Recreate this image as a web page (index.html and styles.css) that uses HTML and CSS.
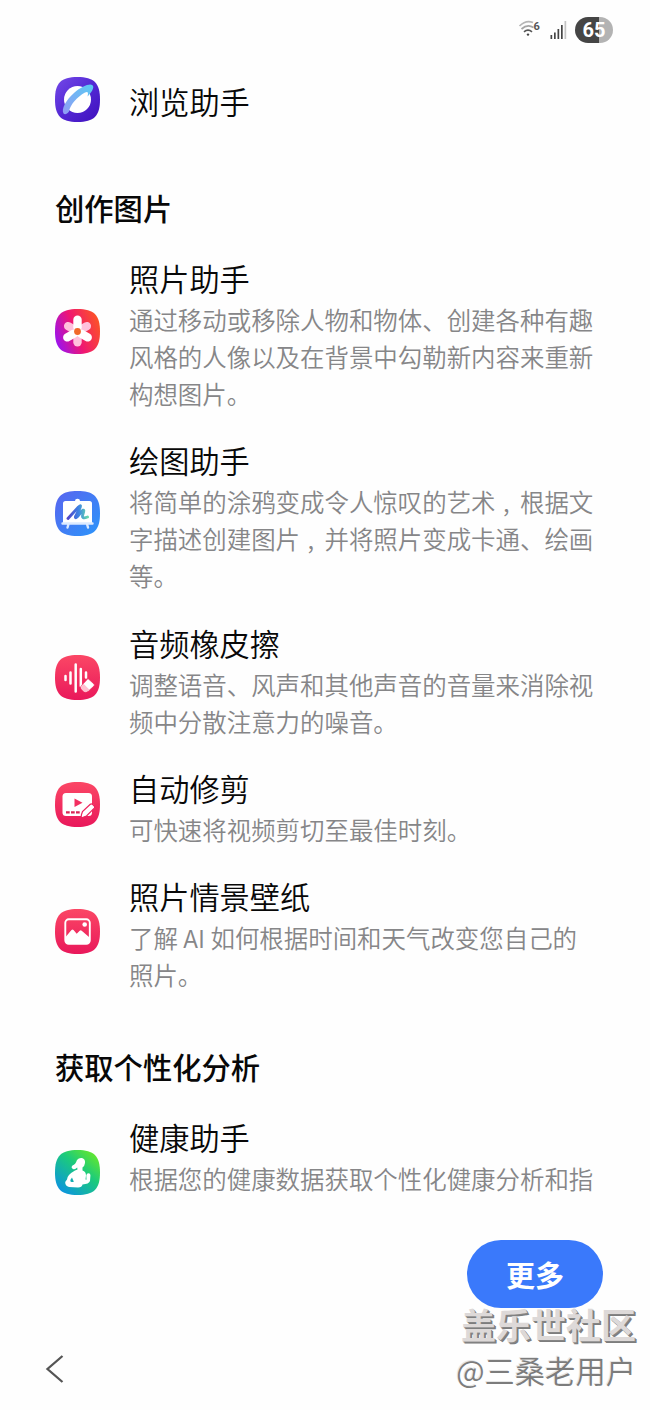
FILE: index.html
```html
<!DOCTYPE html>
<html lang="zh-CN">
<head>
<meta charset="utf-8">
<title>浏览助手</title>
<link rel="stylesheet" href="styles.css">
</head>
<body>
<svg class="defs" width="0" height="0" aria-hidden="true">
  <defs>
    <path id="tile" d="M22.5 0C39 0 45 6 45 22.500S39 45 22.500 45 0 39 0 22.500 6 0 22.500 0Z"/>
    <linearGradient id="violet" x1="0" y1="0" x2="1" y2="1"><stop offset="0" stop-color="#7449e8"/><stop offset=".5" stop-color="#5328d4"/><stop offset="1" stop-color="#3f10bd"/></linearGradient>
    <linearGradient id="ring" x1="1" y1="0" x2="0" y2="1"><stop offset="0" stop-color="#59c9f3"/><stop offset="1" stop-color="#929cf5"/></linearGradient>
    <linearGradient id="photo" x1="0" y1=".75" x2="1" y2=".35"><stop offset="0" stop-color="#9813f4"/><stop offset=".48" stop-color="#ef1672"/><stop offset="1" stop-color="#fc5128"/></linearGradient>
    <linearGradient id="blue" x1="0" y1="0" x2="1" y2="1"><stop offset="0" stop-color="#5964ef"/><stop offset="1" stop-color="#2b95fa"/></linearGradient>
    <linearGradient id="brush" x1="0" y1="0" x2="1" y2="0"><stop offset="0" stop-color="#5146c8"/><stop offset=".55" stop-color="#3d83e4"/><stop offset="1" stop-color="#65d7ab"/></linearGradient>
    <linearGradient id="red" x1="0" y1="0" x2="0" y2="1"><stop offset="0" stop-color="#fb4765"/><stop offset="1" stop-color="#e9185b"/></linearGradient>
    <linearGradient id="health" x1="1" y1="0" x2=".15" y2="1"><stop offset="0" stop-color="#77ef18"/><stop offset=".45" stop-color="#1ccb7b"/><stop offset="1" stop-color="#0a91e5"/></linearGradient>
  </defs>
</svg>
<div class="screen">
  <header class="status">
    <svg class="wifi" viewBox="0 0 24 20" fill="none" stroke-width="1.700">
      <path d="M.5 6Q7 -.5 14 2.500" stroke="#b6b6b6"/><path d="M2.500 9Q8.500 3.500 14.500 7.500" stroke="#a5a5a5"/><path d="M5 11.800Q9 8.500 13 11.800" stroke="#555"/><circle cx="9" cy="14.600" r="1.200" fill="#444"/>
      <text x="14.500" y="9.500" class="wifi-num">6</text>
    </svg>
    <svg class="signal" viewBox="0 0 17 18"><path d="M.5 14h1.700v4H.5zM4 11.500h1.700V18H4zM7.500 8h1.700v10H7.500zM11 4h1.700v14H11z" fill="#454545"/><path d="M14.500 0h1.700v18h-1.700z" fill="#c4c4c4"/></svg>
    <span class="battery">65</span>
  </header>

  <main class="content">
    <article class="item first">
      <svg class="icon" viewBox="0 0 45 45"><use href="#tile" fill="url(#violet)"/><circle cx="22.500" cy="22.500" r="13.500" fill="#fff"/><path d="M8.500 36.500C6 32 11 23 19 16S35 6 37.500 8.200 36 16 32.500 19.500C33.500 15.500 33 14 30 15.500 22 20 15 28 14 34.500 12 37 10 38 8.500 36.500Z" fill="url(#ring)"/></svg>
      <div class="copy"><h3>浏览助手</h3></div>
    </article>

    <section>
      <h2>创作图片</h2>
      <article class="item">
        <svg class="icon" viewBox="0 0 45 45"><use href="#tile" fill="url(#photo)"/>
          <g fill="#ffc1dc"><rect x="18.300" y="7.500" width="8.400" height="15" rx="4.200" transform="rotate(-60 22.500 22.500)"/><rect x="18.300" y="7.500" width="8.400" height="15" rx="4.200" transform="rotate(60 22.500 22.500)"/><rect x="18.300" y="7.500" width="8.400" height="15" rx="4.200" transform="rotate(180 22.500 22.500)"/></g>
          <g fill="#fff"><rect x="18.300" y="6.500" width="8.400" height="16" rx="4.200"/><rect x="18.300" y="6.500" width="8.400" height="16" rx="4.200" transform="rotate(120 22.500 22.500)"/><rect x="18.300" y="6.500" width="8.400" height="16" rx="4.200" transform="rotate(240 22.500 22.500)"/></g><circle cx="22.500" cy="22.500" r="3.400" fill="#f1692a"/></svg>
        <div class="copy"><h3>照片助手</h3><p>通过移动或移除人物和物体、创建各种有趣<br>风格的人像以及在背景中勾勒新内容来重新<br>构想图片。</p></div>
      </article>
      <article class="item">
        <svg class="icon" viewBox="0 0 45 45"><use href="#tile" fill="url(#blue)"/><path d="M10.500 10H20q0-2.200 2.500-2.200T25 10h9.500q2.500 0 2.500 2.500v20H8v-20Q8 10 10.500 10Z" fill="#fff"/><path d="M7.500 32.500h30M13.500 33l-1 3.500M32 33l1 3.500" stroke="#dceaff" stroke-width="2.400" stroke-linecap="round"/><path d="M13 27.500L23.500 16Q27 13 24.500 18L20.500 25.500Q20 28 22.500 25.500L27 20Q30 17.500 28 23T32.500 26" fill="none" stroke="url(#brush)" stroke-width="2.900" stroke-linecap="round" stroke-linejoin="round"/></svg>
        <div class="copy"><h3>绘图助手</h3><p>将简单的涂鸦变成令人惊叹的艺术<span class="comma">,</span>根据文<br>字描述创建图片<span class="comma">,</span>并将照片变成卡通、绘画<br>等。</p></div>
      </article>
      <article class="item">
        <svg class="icon" viewBox="0 0 45 45"><use href="#tile" fill="url(#red)"/><path d="M10.500 21v4M15.500 17.500v11M20.700 9.500v27M25.800 14v17M31 17.500v5" stroke="#fff" stroke-width="2.500" stroke-linecap="round"/><path d="M33 23.500L39 29q1 1 0 2l-5.500 5q-1.500 1.500-4 1L26 34q-1-2 .5-3.500Z" fill="#fff" stroke="#f02b5f" stroke-width=".8"/><path d="M28.500 28.700l6 6-2 1.500q-2 1.300-4 0l-2-2.200q-1-1.700.5-3.500Z" fill="#ffc0d0"/></svg>
        <div class="copy"><h3>音频橡皮擦</h3><p>调整语音、风声和其他声音的音量来消除视<br>频中分散注意力的噪音。</p></div>
      </article>
      <article class="item">
        <svg class="icon" viewBox="0 0 45 45"><use href="#tile" fill="url(#red)"/><rect x="7.500" y="11" width="29.500" height="23" rx="3.500" fill="#fff"/><path d="M19.500 16.500v8.500l8-4.250Z" fill="#f32e60"/><path d="M11 30.300h14.500" stroke="#d92555" stroke-width="2.200" stroke-dasharray="3.700 1.300"/><path d="M26.500 32.500l1-3 7.800-7.300q1-.8 2 0l2 2q.8 1 0 2L31.500 34l-5.500 2Z" fill="#fff" stroke="#ec235d" stroke-width="1.200"/></svg>
        <div class="copy"><h3>自动修剪</h3><p>可快速将视频剪切至最佳时刻。</p></div>
      </article>
      <article class="item">
        <svg class="icon" viewBox="0 0 45 45"><use href="#tile" fill="url(#red)"/><rect x="10.300" y="10.300" width="24.500" height="24.500" rx="3.500" fill="none" stroke="#fff" stroke-width="1.900"/><path d="M11 27.500l5.500-6.500q1-1 2 0l3.200 3.700 3-3q1-.8 2 0l7.300 6.300v5q0 1.500-1.500 1.500h-20q-1.500 0-1.500-1.500Z" fill="#fff"/><circle cx="29.700" cy="15.500" r="2.300" fill="#fff"/></svg>
        <div class="copy"><h3>照片情景壁纸</h3><p>了解 AI 如何根据时间和天气改变您自己的<br>照片。</p></div>
      </article>
    </section>

    <section>
      <h2>获取个性化分析</h2>
      <article class="item last">
        <svg class="icon" viewBox="0 0 45 45"><use href="#tile" fill="url(#health)"/>
          <path d="M22 10Q24 7.500 27 8 30.500 9 30 13 29.500 16.500 27.500 17.500L27.500 20.500Q31 21.500 31 25.500L30.500 29.500 31.500 29.800 31.300 25.500Q31.500 23.300 33.500 23.300 36 23.500 35.300 27L35 31Q34 34 27.500 34.500 27 37.500 23 37.500L14 37Q10 36 10.200 32L12 29.500Q12 25 20 20.500L22.500 19.500 22.200 17.500Q20 20 18 19 15.500 17.500 17.500 15.500 20.500 14.500 22 10Z" fill="#fff"/><path d="M17 27.500Q14.800 30 15.500 31.500 17.500 32.500 18.800 31.700Z" fill="#12adb0"/></svg>
        <div class="copy"><h3>健康助手</h3><p>根据您的健康数据获取个性化健康分析和指</p></div>
      </article>
    </section>
  </main>

  <footer class="footer">
    <button class="more">更多</button>
    <svg class="back" viewBox="0 0 20 30"><path d="M17.500 2L2.500 15l15 13" fill="none" stroke="#555" stroke-width="2.300"/></svg>
    <div class="watermark"><div class="community">盖乐世社区</div><div class="user">@三桑老用户</div></div>
  </footer>
</div>
</body>
</html>
```
FILE: styles.css
```css
* { box-sizing: border-box; margin: 0; padding: 0; }
body { background: #fefefe; font-family: "Noto Sans CJK SC", sans-serif; color: #080808; }
.defs { position: absolute; }
.screen { width: 650px; height: 1410px; overflow: hidden; display: flex; flex-direction: column; }
.status { height: 77px; flex: none; display: flex; align-items: flex-start; justify-content: flex-end; padding: 17px 37px 0 0; }
.wifi { width: 24px; height: 20px; margin: 3px 7px 0 0; overflow: visible; }
.wifi-num { font: bold 11px Roboto, sans-serif; fill: #555; stroke: none; }
.signal { width: 17px; height: 18px; margin: 4px 8px 0 0; }
.battery { width: 38px; height: 26px; border-radius: 13px; background: linear-gradient(90deg, #454545 64%, #b3b3b3 64%); color: #fff; font: bold 20px/26px Roboto, sans-serif; text-align: center; }
.content { height: 1129px; flex: none; }
.item { display: flex; align-items: center; padding-left: 55px; margin-bottom: 27.300px; }
.icon { width: 45px; height: 45px; flex: none; margin: 0 29px 6px 0; overflow: visible; }
.copy { white-space: nowrap; }
h3 { font-size: 30.200px; line-height: 43px; padding-bottom: 1px; font-weight: 350; }
p { font-family: "Noto Sans CJK SC DemiLight", "Noto Sans CJK SC", sans-serif; font-size: 24.440px; line-height: 37px; color: #868688; font-weight: 350; }
.comma { display: inline-block; width: 1em; padding-right: 3px; text-align: center; }
h2 { font-size: 29.300px; line-height: 44px; font-weight: 500; padding-left: 55px; margin-bottom: 28px; }
.first { margin-bottom: 57px; }
.first .copy { padding-bottom: 1px; }
section { margin-bottom: 51px; }
.last { align-items: flex-start; margin-bottom: 0; }
.last .icon { margin-top: 34px; }
section:last-child { margin-bottom: 0; }
.footer { flex: 1; display: grid; grid-template-columns: 1fr auto; grid-template-rows: 68px 1fr; padding-top: 34px; }
.more { grid-column: 2; width: 136px; height: 68px; margin-right: 47px; justify-self: end; border: 0; border-radius: 34px; background: #3a79fb; color: #fff; font: bold 29px/68px "Noto Sans CJK SC", sans-serif; }
.back { width: 20px; height: 30px; margin: 46px 0 0 45px; }
.watermark { margin: -7px 14px 0 0; text-align: right; white-space: nowrap; position: relative; }
.community { font-size: 35px; line-height: 46px; font-weight: 700; color: #ddd9d8; text-shadow: 1px 1px 0 #858585, 2px 2px 0 #7d7d7d; }
.user { font-size: 30.300px; line-height: 46px; font-weight: 350; color: #7c7c7c; text-shadow: -1px -1px 0 #e5e5e5; }
```
